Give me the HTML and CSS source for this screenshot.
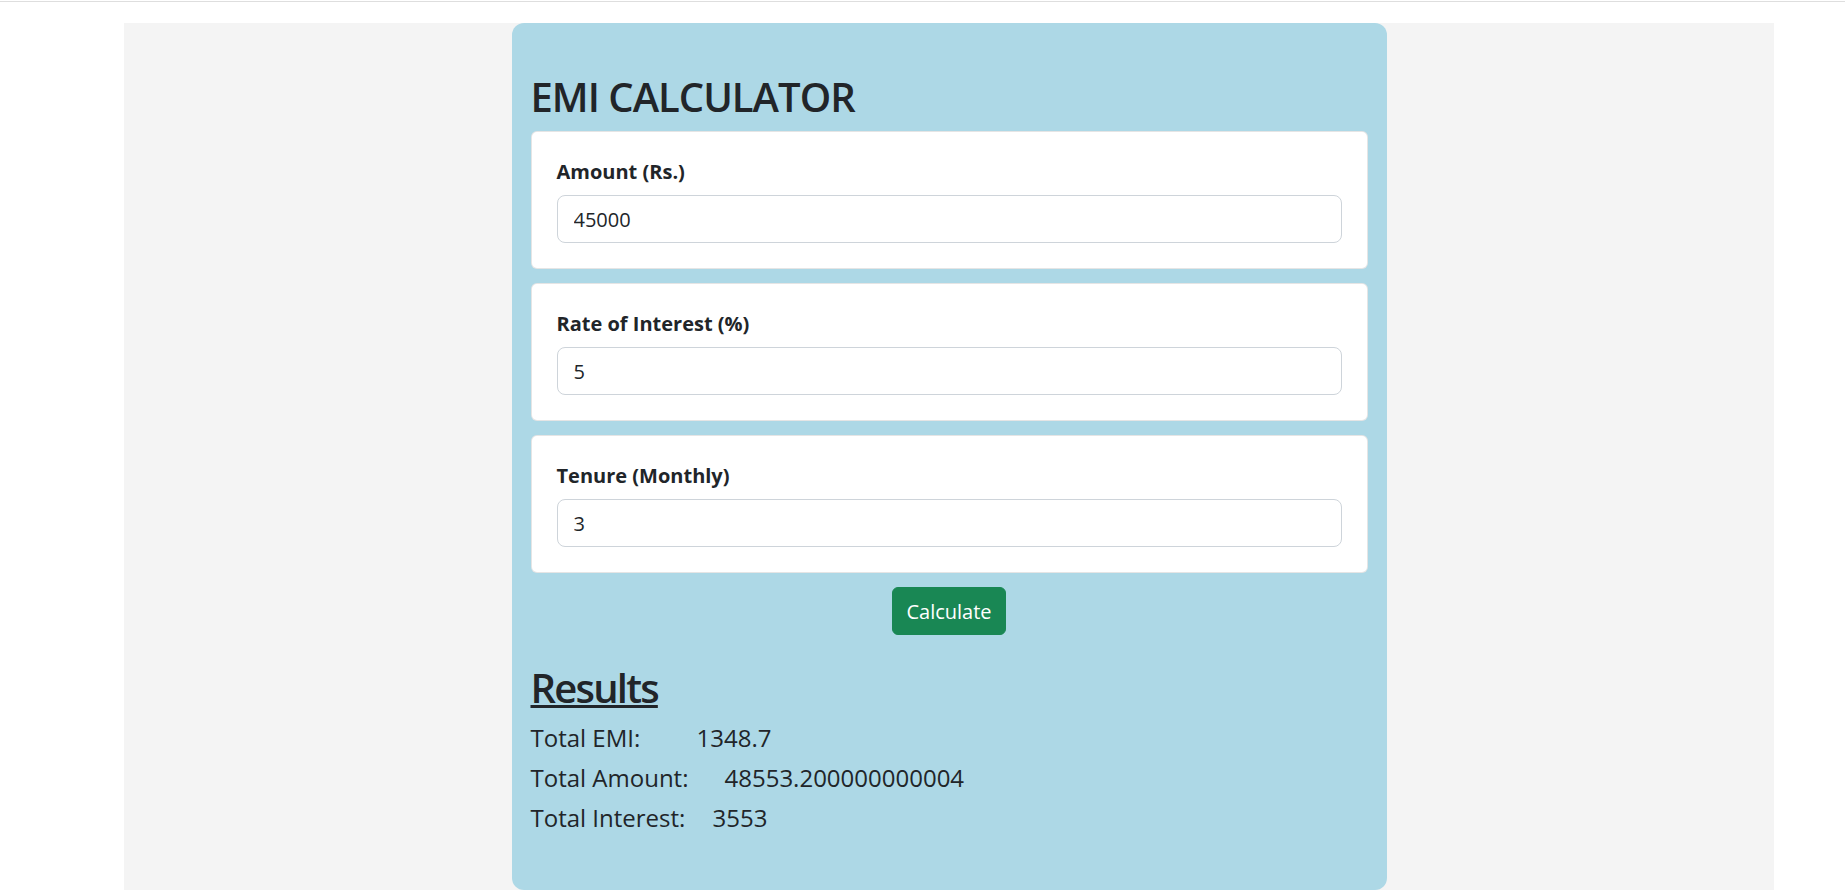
FILE: index.html
```html
<!DOCTYPE html>
<html lang="en">
<head>
<meta charset="utf-8">
<title>EMI Calculator</title>
<link rel="stylesheet" href="styles.css">
</head>
<body>
<div class="topline"></div>
<main class="page">
  <section class="calc">
    <h1 class="title">EMI CALCULATOR</h1>
    <div class="field-card">
      <label class="field-label" for="amount">Amount (Rs.)</label>
      <input class="field-input" id="amount" type="text" value="45000">
    </div>
    <div class="field-card">
      <label class="field-label" for="rate">Rate of Interest (%)</label>
      <input class="field-input" id="rate" type="text" value="5">
    </div>
    <div class="field-card">
      <label class="field-label" for="tenure">Tenure (Monthly)</label>
      <input class="field-input" id="tenure" type="text" value="3">
    </div>
    <div class="actions">
      <button class="btn-calc" type="button">Calculate</button>
    </div>
    <h1 class="results-title">Results</h1>
    <div class="result-row"><span class="result-label w-emi">Total EMI:</span><span class="result-value">1348.7</span></div>
    <div class="result-row"><span class="result-label w-amount">Total Amount:</span><span class="result-value">48553.200000000004</span></div>
    <div class="result-row"><span class="result-label w-interest">Total Interest:</span><span class="result-value">3553</span></div>
  </section>
</main>
</body>
</html>
```
FILE: styles.css
```css
html, body {
  margin: 0;
  padding: 0;
}
body {
  font-family: "Open Sans", "Noto Sans", sans-serif;
  color: #212529;
  background: #ffffff;
}
.topline {
  height: 1px;
  margin-top: 1px;
  background: #dedede;
}
.page {
  margin: 21px 71px 0 124px;
  background: #f4f4f4;
  display: flex;
  justify-content: center;
}
.calc {
  width: 875px;
  box-sizing: border-box;
  background: #add8e6;
  border-radius: 12px;
  padding: 50px 19px 50px;
}
.title {
  margin: 0 0 10px;
  font-size: 40px;
  font-weight: 600;
  letter-spacing: -1px;
  line-height: 48px;
}
.field-card {
  background: #ffffff;
  border: 1px solid rgba(0, 0, 0, 0.1);
  border-radius: 6px;
  padding: 25px;
  margin-bottom: 14px;
}
.field-label {
  display: block;
  font-size: 20px;
  font-weight: 700;
  line-height: 30px;
  margin-bottom: 8px;
}
.field-input {
  display: block;
  width: 100%;
  box-sizing: border-box;
  height: 48px;
  padding: 8px 16px;
  font-family: inherit;
  font-size: 20px;
  color: #212529;
  background: #ffffff;
  border: 1px solid #ced4da;
  border-radius: 8px;
  outline: none;
}
.actions {
  display: flex;
  justify-content: center;
  margin: 0 0 29px;
}
.btn-calc {
  height: 48px;
  padding: 0 13px;
  font-family: inherit;
  font-size: 20px;
  color: #ffffff;
  background: #198754;
  border: 1px solid #198754;
  border-radius: 6px;
}
.results-title {
  margin: 0 0 8px;
  font-size: 40px;
  font-weight: 600;
  letter-spacing: -1.8px;
  line-height: 48px;
  text-decoration: underline;
  text-decoration-thickness: 3px;
}
.result-row {
  font-size: 24px;
  line-height: 36px;
  margin-bottom: 4px;
}
.result-label {
  display: inline-block;
}
.w-emi { width: 166px; }
.w-amount { width: 194px; }
.w-interest { width: 182px; }
```
